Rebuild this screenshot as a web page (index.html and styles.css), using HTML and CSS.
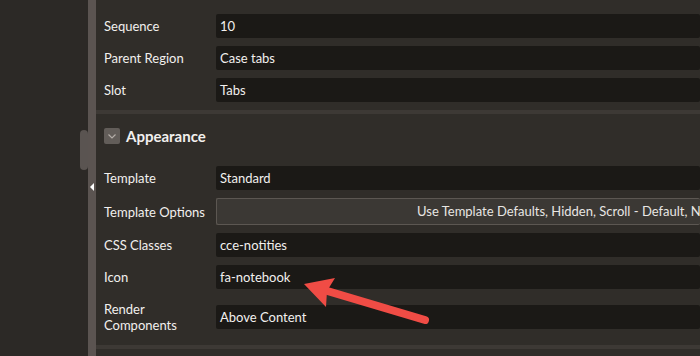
FILE: index.html
```html
<!DOCTYPE html>
<html>
<head>
<meta charset="utf-8">
<link rel="stylesheet" href="styles.css">
</head>
<body>
<div class="app">
  <aside class="left">
    <div class="thumb"></div>
  </aside>
  <div class="splitter"><span class="tri"></span></div>
  <main class="main">
    <section class="group first">
      <div class="row"><div class="label">Sequence</div><div class="field">10</div></div>
      <div class="row"><div class="label">Parent Region</div><div class="field">Case tabs</div></div>
      <div class="row"><div class="label">Slot</div><div class="field">Tabs</div></div>
    </section>
    <section class="group">
      <div class="ghead">
        <span class="toggle"><svg width="16" height="16" viewBox="0 0 16 16"><path d="M4.5 6.5 L8 10 L11.5 6.5" fill="none" stroke="#b3ada8" stroke-width="1.2"/></svg></span>
        <span class="gtitle">Appearance</span>
      </div>
      <div class="row"><div class="label">Template</div><div class="field">Standard</div></div>
      <div class="row"><div class="label">Template Options</div><div class="field opts">Use Template Defaults, Hidden, Scroll - Default, None</div></div>
      <div class="row"><div class="label">CSS Classes</div><div class="field">cce-notities</div></div>
      <div class="row"><div class="label">Icon</div><div class="field">fa-notebook</div></div>
      <div class="row"><div class="label">Render Components</div><div class="field">Above Content</div></div>
    </section>
    <section class="group last"></section>
    <svg class="arrow" width="700" height="356" viewBox="0 0 700 356">
      <line x1="425" y1="320" x2="324" y2="290" stroke="#f04c45" stroke-width="8" stroke-linecap="round"/>
      <polygon points="304,284 335,278 327,291 326,307" fill="#f04c45"/>
    </svg>
  </main>
</div>
</body>
</html>
```
FILE: styles.css
```css
html, body {
  margin: 0;
  padding: 0;
  width: 700px;
  height: 356px;
  overflow: hidden;
  background: #302d29;
}
.app {
  display: flex;
  height: 356px;
  font-family: Lato, "Noto Sans", sans-serif;
  font-size: 13px;
  color: #f2f0ee;
}
.left {
  width: 88px;
  background: #2c2926;
  display: flex;
  flex-direction: column;
  align-items: flex-end;
}
.thumb {
  margin-top: 130px;
  width: 8px;
  height: 40px;
  border-radius: 4px;
  background: #5a5451;
}
.splitter {
  width: 8px;
  background: #5b5451;
  display: flex;
  flex-direction: column;
  align-items: center;
  padding-top: 183px;
  box-sizing: border-box;
}
.tri {
  width: 0;
  height: 0;
  border-top: 4px solid transparent;
  border-bottom: 4px solid transparent;
  border-right: 4px solid #ffffff;
}
.main {
  flex: 1;
  padding-top: 10px;
  overflow: hidden;
}
.group {
  padding: 0 0 4px 8px;
  border-top: 4px solid #3d3935;
}
.group.first {
  border-top: none;
}
.row {
  display: flex;
  align-items: center;
  padding: 4px 0;
}
.label {
  width: 112px;
  flex: none;
  line-height: 16px;
  padding: 4px 6px 4px 0;
  box-sizing: border-box;
}
.field {
  flex: 1;
  height: 24px;
  line-height: 24px;
  background: #1b1916;
  border-radius: 2px;
  padding-left: 4px;
  white-space: nowrap;
  overflow: hidden;
}
.field.opts {
  height: 27px;
  line-height: 25px;
  box-sizing: border-box;
  background: #3b3834;
  border: 1px solid #5c5752;
  border-right: none;
  padding-left: 200px;
  color: #e8e6e3;
}
.ghead {
  display: flex;
  align-items: center;
  gap: 6px;
  padding: 12px 0 16px;
  height: 20px;
}
.toggle {
  width: 16px;
  height: 16px;
  background: #625d59;
  border-radius: 2px;
  display: block;
}
.toggle svg { display: block; }
.gtitle {
  font-weight: bold;
  font-size: 15px;
}
.arrow {
  position: absolute;
  left: 0;
  top: 0;
  pointer-events: none;
}
```
